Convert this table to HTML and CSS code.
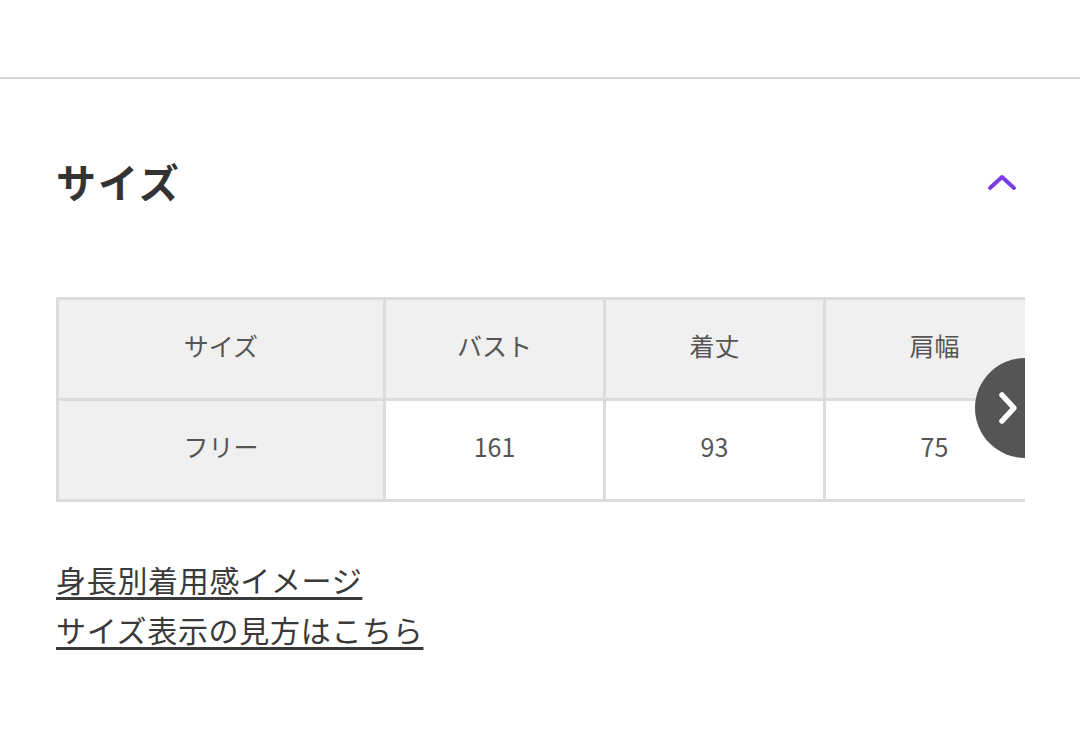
FILE: index.html
```html
<!DOCTYPE html>
<html lang="ja">
<head>
<meta charset="utf-8">
<link rel="stylesheet" href="styles.css">
</head>
<body>
<div class="topbar"></div>
<section class="section">
  <div class="section-head">
    <h2 class="title">サイズ</h2>
    <svg class="toggle" width="30" height="18" viewBox="0 0 30 18"><path d="M3 15 L15 4 L27 15" fill="none" stroke="#7a3de6" stroke-width="4" stroke-linecap="round" stroke-linejoin="round"/></svg>
  </div>
  <div class="table-wrap">
    <table class="size-table">
      <colgroup><col class="c1"><col class="cn"><col class="cn"><col class="cn"></colgroup>
      <tr><th>サイズ</th><th>バスト</th><th>着丈</th><th>肩幅</th></tr>
      <tr><th>フリー</th><td>161</td><td>93</td><td>75</td></tr>
    </table>
    <div class="next-btn">
      <svg width="28" height="36" viewBox="0 0 28 36"><path d="M7 5 L19 18 L7 31" fill="none" stroke="#fff" stroke-width="5.5" stroke-linecap="round" stroke-linejoin="round"/></svg>
    </div>
  </div>
  <div class="links">
    <a href="#" class="link">身長別着用感イメージ</a>
    <a href="#" class="link">サイズ表示の見方はこちら</a>
  </div>
</section>
</body>
</html>
```

FILE: styles.css
```css
html, body {
  margin: 0;
  padding: 0;
  background: #fff;
}
body {
  font-family: "Noto Sans CJK JP", "Noto Sans", sans-serif;
  color: #333;
  width: 1080px;
  height: 754px;
  overflow: hidden;
}
.topbar {
  height: 77px;
  border-bottom: 2px solid #d6d6d6;
}
.section {
  padding: 0 55px 0 56px;
}
.section-head {
  display: flex;
  justify-content: space-between;
  align-items: center;
  margin-top: 78px;
  height: 48px;
}
.title {
  margin: 0;
  font-size: 40px;
  font-weight: 700;
  color: #333;
  line-height: 48px;
  letter-spacing: 2px;
}
.toggle {
  margin-right: 8px;
  margin-top: 2px;
  display: block;
}
.table-wrap {
  position: relative;
  overflow: hidden;
  margin-top: 92px;
}
.size-table {
  border-collapse: collapse;
  table-layout: fixed;
  width: 990px;
}
.c1 { width: 327px; }
.cn { width: 220px; }
.size-table th, .size-table td {
  border: 3px solid #dcdcdc;
  height: 101px;
  text-align: center;
  vertical-align: middle;
  font-size: 25px;
  font-weight: 400;
  color: #555;
  padding: 0 0 9px 0;
  box-sizing: border-box;
}
.size-table th {
  background: #f0f0f0;
}
.size-table td {
  background: #fff;
}
.next-btn {
  position: absolute;
  left: 919px;
  top: 61px;
  width: 100px;
  height: 100px;
  border-radius: 50%;
  background: #555;
  display: flex;
  align-items: center;
  justify-content: flex-start;
  padding-left: 20px;
  box-sizing: border-box;
}
.next-btn svg { display: block; }
.links {
  display: flex;
  flex-direction: column;
  align-items: flex-start;
  margin-top: 52px;
}
.link {
  font-size: 30px;
  line-height: 50px;
  letter-spacing: 0.7px;
  color: #3a3a3a;
  text-decoration: underline;
  text-decoration-thickness: 3px;
  text-underline-offset: 5px;
}
```
